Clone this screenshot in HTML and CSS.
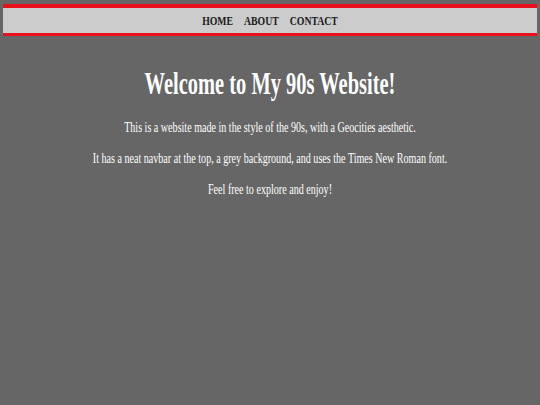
FILE: index.html
```html
<!DOCTYPE html>
<html>
<head>
<meta charset="utf-8">
<title>My 90s Website</title>
<link rel="stylesheet" href="styles.css">
</head>
<body>
<nav class="navbar">
  <ul class="nav-list">
    <li><a class="nav-link" href="#">HOME</a></li>
    <li><a class="nav-link" href="#">ABOUT</a></li>
    <li><a class="nav-link" href="#">CONTACT</a></li>
  </ul>
</nav>
<main class="content">
  <h1 class="title">Welcome to My 90s Website!</h1>
  <p class="text">This is a website made in the style of the 90s, with a Geocities aesthetic.</p>
  <p class="text">It has a neat navbar at the top, a grey background, and uses the Times New Roman font.</p>
  <p class="text">Feel free to explore and enjoy!</p>
</main>
</body>
</html>
```
FILE: styles.css
```css
html, body {
  margin: 0;
  padding: 0;
}
body {
  background: #666666;
  font-family: "Liberation Serif", "Times New Roman", serif;
  color: #ffffff;
  height: 405px;
  overflow: hidden;
}
.navbar {
  margin: 4px 3px 0;
  background: #cccccc;
  border-top: 4px solid #e8101a;
  border-bottom: 3px solid #e8101a;
  height: 25px;
}
.nav-list {
  list-style: none;
  margin: 0;
  padding: 0;
  display: flex;
  justify-content: center;
  gap: 14.7px;
  transform: scaleX(0.75);
  height: 25px;
  align-items: center;
}
.nav-link {
  display: block;
  font-size: 13px;
  line-height: 25px;
  font-weight: bold;
  color: #1a1a1a;
  text-decoration: none;
}
.content {
  text-align: center;
}
.title {
  margin: 30px 0 18px;
  font-size: 31px;
  line-height: 36px;
  font-weight: bold;
  transform: scaleX(0.66);
}
.text {
  margin: 0 0 15px;
  font-size: 14px;
  line-height: 16px;
  transform: scaleX(0.72);
}
```
